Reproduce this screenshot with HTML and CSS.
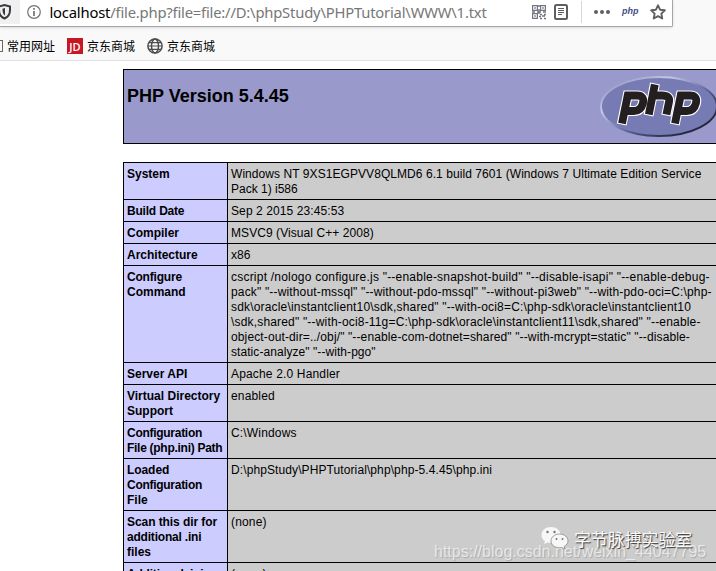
FILE: index.html
```
<!DOCTYPE html>
<html lang="zh-CN">
<head>
<meta charset="utf-8">
<title>phpinfo()</title>
<link rel="stylesheet" href="styles.css">
</head>
<body>
<header class="chrome">
  <div class="urlbar">
    <div class="shield"><svg width="12" height="20" viewBox="0 0 12 20"><path d="M-1 6.500 L4.500 5 L10 6.500 V10 C10 14 8 17 4.500 18.500 C1 17 -1 14 -1 10Z" fill="none" stroke="#38383d" stroke-width="2"/><path d="M5 8v7.500c-2-1.500-2.500-3-2.500-6.800z" fill="#38383d"/></svg></div>
    <svg class="info" width="14" height="14" viewBox="0 0 14 14"><circle cx="7" cy="7" r="6.300" fill="none" stroke="#737373" stroke-width="1.200"/><path d="M7 6v5M7 3v1.700" stroke="#737373" stroke-width="1.700"/></svg>
    <div class="url"><b>localhost</b>/file.php?file=file://D:\phpStudy\PHPTutorial\WWW\1.txt</div>
    <div class="tools">
      <svg width="14" height="14" viewBox="0 0 14 14" fill="none" stroke="#71757f" stroke-width="1.200"><path d="M.6.600h4.800v4.800H.6zM8.600.600h4.800v4.800H8.600zM.6 8.600h4.800v4.800H.6z"/><path d="M2.300 3h1.500M10.300 3h1.500M2.300 11h1.500M7 0v2M7 4v5M0 7h3M5 7h4M11 7h3M8 9.500h2M12 9.500h2M7 11.500h2M10 11h3M8 13.400h2M12 13.400h2" stroke-width="1.500"/></svg>
      <svg class="reader" width="14" height="16" viewBox="0 0 14 16"><rect x="1" y="1" width="12" height="14" rx="1.500" fill="none" stroke="#5f5f61" stroke-width="2"/><path d="M4 4.500h6M4 6.500h6M4 8.500h6M4 10.500h4" stroke="#5f5f61"/></svg>
      <i class="divider"></i>
      <svg class="dots" width="16" height="4" viewBox="0 0 16 4" fill="#5f5f61"><circle cx="2" cy="2" r="2"/><circle cx="8" cy="2" r="2"/><circle cx="14" cy="2" r="2"/></svg>
      <span class="php-mini">php</span>
      <svg class="star" width="16" height="16" viewBox="0 0 16 16"><path d="M8 1.300l2.050 4.400 4.800.600-3.500 3.300.900 4.900L8 12.100l-4.250 2.400.9-4.900-3.500-3.300 4.800-.6z" fill="none" stroke="#5f5f61" stroke-width="1.900" stroke-linejoin="round"/></svg>
    </div>
  </div>
  <nav class="bookmarks">
    <i class="folder"></i><span class="bm common">常用网址</span>
    <span class="jd">JD</span><span class="bm first">京东商城</span>
    <svg class="globe" width="16" height="16" viewBox="0 0 16 16" fill="none" stroke="#4d4d50" stroke-width="1.500"><circle cx="8" cy="8" r="7.100"/><ellipse cx="8" cy="8" rx="3.500" ry="7"/><path d="M1 8h14M2 4.600h12M2 11.400h12" stroke-width="1.200"/></svg><span class="bm">京东商城</span>
  </nav>
</header>
<main>
  <section class="banner">
    <h1>PHP Version 5.4.45</h1>
    <svg class="logo" width="120" height="67" viewBox="0 0 120 67">
      <defs><linearGradient id="rim" x1="0" y1="0" x2="1" y2="1"><stop offset="0" stop-color="#8386ba"/><stop offset=".3" stop-color="#c3c8e2"/><stop offset=".45" stop-color="#8e92c2"/><stop offset=".6" stop-color="#555989"/><stop offset=".75" stop-color="#343657"/><stop offset="1" stop-color="#101018"/></linearGradient></defs>
      <ellipse cx="59" cy="33.500" rx="58" ry="29.500" fill="#777bb4" stroke="url(#rim)" stroke-width="2"/>
      <g fill="none">
        <path d="M21.700 51.500L27.700 22.500H37Q44.500 22.500 43 30Q41 38 34 38H25M48.500 42.500L55 10.500M53 22.500H62Q70.500 22.500 69 29L66.200 42.500M74.700 51.500L80.700 22.500H90Q97.500 22.500 96 30Q94 38 87 38H78" stroke="#fff" stroke-width="10"/>
        <path d="M22 50.500L27.700 22.500H37Q44.500 22.500 43 30Q41 38 34 38H25M48.800 41.500L54.800 11.500M53 22.500H62Q70.500 22.500 69 29L66.400 41.500M75 50.500L80.700 22.500H90Q97.500 22.500 96 30Q94 38 87 38H78" stroke="#231f20" stroke-width="7.800"/>
      </g>
    </svg>
  </section>
  <table>
    <tr><th>System</th><td><span class="t1">Windows NT 9XS1EGPVV8QLMD6 6.1 build 7601 (Windows 7 Ultimate Edition Service</span><br>Pack 1) i586</td></tr>
    <tr><th class="n2">Build Date</th><td class="t2">Sep 2 2015 23:45:53</td></tr>
    <tr><th>Compiler</th><td class="t1">MSVC9 (Visual C++ 2008)</td></tr>
    <tr><th>Architecture</th><td>x86</td></tr>
    <tr><th><span class="n2">Configure</span><br>Command</th><td><span class="c1">cscript /nologo configure.js "--enable-snapshot-build" "--disable-isapi" "--enable-debug-</span><br><span class="c2">pack" "--without-mssql" "--without-pdo-mssql" "--without-pi3web" "--with-pdo-oci=C:\php-</span><br><span class="c3">sdk\oracle\instantclient10\sdk,shared" "--with-oci8=C:\php-sdk\oracle\instantclient10</span><br><span class="c3">\sdk,shared" "--with-oci8-11g=C:\php-sdk\oracle\instantclient11\sdk,shared" "--enable-</span><br><span class="c5">object-out-dir=../obj/" "--enable-com-dotnet=shared" "--with-mcrypt=static" "--disable-</span><br><span class="t1">static-analyze" "--with-pgo"</span></td></tr>
    <tr><th>Server API</th><td class="c2">Apache 2.0 Handler</td></tr>
    <tr><th>Virtual Directory<br>Support</th><td class="c2">enabled</td></tr>
    <tr><th class="n3">Configuration<br>File (php.ini) Path</th><td class="c2">C:\Windows</td></tr>
    <tr><th><span class="n1">Loaded</span><br><span class="n3">Configuration</span><br>File</th><td class="t2">D:\phpStudy\PHPTutorial\php\php-5.4.45\php.ini</td></tr>
    <tr><th><span class="n1">Scan this dir for</span><br><span class="n2">additional .ini</span><br>files</th><td class="c2">(none)</td></tr>
    <tr><th><span class="n2">Additional .ini</span><br>files parsed</th><td class="c2">(none)</td></tr>
  </table>
</main>
<div class="blog-mark">https://blog.csdn.net/weixin_44047795</div>
<div class="wechat-mark">
  <svg width="28" height="24" viewBox="0 0 28 24"><path d="M10 1C4.500 1 .5 4.500.5 9c0 2.700 1.300 4.800 3.500 6.200L3 18l3.500-1.600c7 1.700 13-2 13-7.400C19.500 4.500 15.500 1 10 1z" fill="#f7f7f7"/><path d="M18.500 8C13.700 8 10 11.200 10 15c0 4.500 5 7.800 10.500 6.500L24 23l-.8-2.600c2.300-1.300 3.800-3.200 3.800-5.400C27 11.200 23.300 8 18.500 8z" fill="#f7f7f7" stroke="#888" stroke-width=".8"/><g fill="#777"><circle cx="6.500" cy="6" r="1.200"/><circle cx="13.500" cy="6" r="1.200"/><circle cx="15.500" cy="13" r="1"/><circle cx="21.500" cy="13" r="1"/></g></svg>
  <span>字节脉搏实验室</span>
</div>
</body>
</html>
```
FILE: styles.css
```
body { margin: 0; width: 716px; height: 571px; overflow: hidden; position: relative; background: #fff; color: #000; font-family: "Liberation Sans", sans-serif; }
svg { display: block; flex: none; overflow: visible; }
.chrome { height: 60px; background: #f9f9fa; border-bottom: 1px solid #e0e0e1; }
.urlbar { box-sizing: border-box; width: 673px; height: 27px; background: #fff; border: solid #a5a5a7; border-width: 0 1px 1px 0; border-radius: 0 0 2px 0; box-shadow: 0 1px 3px rgba(0,0,0,.12); display: flex; align-items: flex-start; }
.shield { width: 20px; height: 24px; background: #f0f0f1; overflow: hidden; flex: none; }
.info { margin: 5px 0 0 7px; }
.url { margin: 2px 0 0 8.500px; width: 482.500px; font: 14.800px/21px "Noto Sans", sans-serif; letter-spacing: -.2px; color: #777; white-space: nowrap; flex: none; }
.url b { color: #000; font-weight: 400; }
.tools { display: flex; height: 24px; align-items: center; flex: none; }
.reader { margin-left: 8px; }
.divider { width: 1px; height: 22px; margin: 0 12px 0 13px; background: #d7d7db; }
.php-mini { margin: -2px 12px 0; font: italic bold 9px/14px "Liberation Sans", sans-serif; color: #484c89; width: 16px; }
.bookmarks { height: 31px; display: flex; align-items: center; padding-top: 3px; }
.folder { box-sizing: border-box; width: 3px; height: 12px; border: solid #666; border-width: 1px 1px 1px 0; }
.bm { font: 12px/18px "Noto Sans CJK SC", sans-serif; width: 49px; white-space: nowrap; }
.common { margin: 0 11px 0 4px; }
.jd { width: 16px; height: 16px; margin-right: 4px; background: #c81623; color: #fff; font: 600 11px/17px "Open Sans", sans-serif; text-align: center; }
.first { margin-right: 11px; }
.globe { margin-right: 4px; }
main { margin: 8px 0 0 123px; width: 600px; }
.banner { box-sizing: border-box; height: 75px; border: 1px solid #000; background: #9999cc; display: flex; justify-content: space-between; align-items: flex-start; padding: 3px; }
h1 { margin: 12px 0 0; font-size: 18px; line-height: 22px; }
.logo { margin-right: -1px; }
table { width: 600px; margin-top: 18px; border-collapse: collapse; table-layout: fixed; font-size: 12px; line-height: 15px; }
th, td { border: 1px solid #000; padding: 4px 3px 2px; text-align: left; vertical-align: top; white-space: nowrap; }
th { width: 97px; background: #ccccff; }
td { background: #ccc; }
.t1 { letter-spacing: .066px; }
.t2 { letter-spacing: .1px; }
.c1 { letter-spacing: .216px; }
.c2 { letter-spacing: .16px; }
.c3 { letter-spacing: .176px; }
.c5 { letter-spacing: .125px; }
.n1 { letter-spacing: -.07px; }
.n2 { letter-spacing: -.2px; }
.n3 { letter-spacing: -.28px; }
.blog-mark { position: absolute; left: 434px; top: 543px; font: 16px/18px "Liberation Sans", sans-serif; color: rgba(255,255,255,.65); text-shadow: 1px 1px 1px rgba(120,120,120,.4); white-space: nowrap; }
.wechat-mark { position: absolute; left: 541px; top: 526px; display: flex; color: #fafafa; font: 16.900px/25px "Noto Sans CJK SC", sans-serif; text-shadow: 1px 1px 1px #333; white-space: nowrap; }
.wechat-mark span { margin-left: 5px; }
```
